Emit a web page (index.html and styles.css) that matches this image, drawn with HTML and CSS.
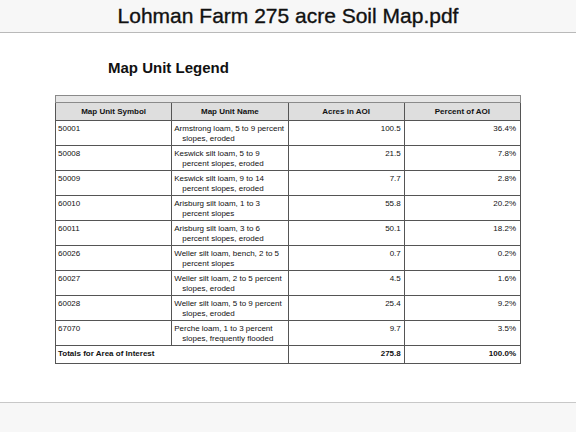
FILE: index.html
```html
<!DOCTYPE html>
<html>
<head>
<meta charset="utf-8">
<link rel="stylesheet" href="styles.css">
</head>
<body>
<div class="app">
  <header class="topbar">
    <h1 class="doc-title">Lohman Farm 275 acre Soil Map.pdf</h1>
  </header>
  <main class="page">
    <h2 class="legend-title">Map Unit Legend</h2>
    <table class="legend">
      <tr class="band"><td colspan="4"></td></tr>
      <tr class="head">
        <th>Map Unit Symbol</th>
        <th>Map Unit Name</th>
        <th>Acres in AOI</th>
        <th>Percent of AOI</th>
      </tr>
      <tr><td class="sym">50001</td><td class="name">Armstrong loam, 5 to 9 percent slopes, eroded</td><td class="num">100.5</td><td class="num pct">36.4%</td></tr>
      <tr><td class="sym">50008</td><td class="name">Keswick silt loam, 5 to 9 percent slopes, eroded</td><td class="num">21.5</td><td class="num pct">7.8%</td></tr>
      <tr><td class="sym">50009</td><td class="name">Keswick silt loam, 9 to 14 percent slopes, eroded</td><td class="num">7.7</td><td class="num pct">2.8%</td></tr>
      <tr><td class="sym">60010</td><td class="name">Arisburg silt loam, 1 to 3 percent slopes</td><td class="num">55.8</td><td class="num pct">20.2%</td></tr>
      <tr><td class="sym">60011</td><td class="name">Arisburg silt loam, 3 to 6 percent slopes, eroded</td><td class="num">50.1</td><td class="num pct">18.2%</td></tr>
      <tr><td class="sym">60026</td><td class="name">Weller silt loam, bench, 2 to 5 percent slopes</td><td class="num">0.7</td><td class="num pct">0.2%</td></tr>
      <tr><td class="sym">60027</td><td class="name">Weller silt loam, 2 to 5 percent slopes, eroded</td><td class="num">4.5</td><td class="num pct">1.6%</td></tr>
      <tr><td class="sym">60028</td><td class="name">Weller silt loam, 5 to 9 percent slopes, eroded</td><td class="num">25.4</td><td class="num pct">9.2%</td></tr>
      <tr><td class="sym">67070</td><td class="name">Perche loam, 1 to 3 percent slopes, frequently flooded</td><td class="num">9.7</td><td class="num pct">3.5%</td></tr>
      <tr class="total"><td colspan="2" class="sym">Totals for Area of Interest</td><td class="num">275.8</td><td class="num pct">100.0%</td></tr>
    </table>
  </main>
  <footer class="bottombar"></footer>
</div>
</body>
</html>
```
FILE: styles.css
```css
html, body {
  margin: 0;
  padding: 0;
  background: #ffffff;
}
.app {
  width: 576px;
  height: 432px;
  display: flex;
  flex-direction: column;
  font-family: "Liberation Sans", Arial, sans-serif;
  color: #111;
  overflow: hidden;
}
.topbar {
  height: 32px;
  background: #f7f7f7;
  border-bottom: 1px solid #b9b9b9;
  display: flex;
  align-items: center;
  justify-content: center;
  flex: none;
}
.doc-title {
  margin: 0;
  font-size: 21px;
  font-weight: normal;
  -webkit-text-stroke: 0.35px #111;
  color: #111;
  line-height: 24px;
  padding-top: 0;
}
.page {
  flex: 1;
  padding-top: 26px;
}
.legend-title {
  margin: 0 0 18px 108px;
  font-size: 15px;
  font-weight: bold;
  line-height: 18px;
}
.legend {
  margin-left: 55px;
  width: 466px;
  border-collapse: collapse;
  table-layout: fixed;
  font-size: 8px;
  border: 1px solid #8a8a8a;
}
.legend td, .legend th {
  border: 1px solid #555;
  padding: 0;
}
.legend tr {
  height: 25px;
}
.legend tr.band {
  height: 7px;
}
.legend tr.band td {
  background: #e6e6e6;
  border-color: #8a8a8a;
}
.legend tr.head {
  height: 18px;
}
.legend th {
  background: #dedede;
  font-weight: bold;
  text-align: center;
  vertical-align: middle;
  line-height: 10px;
}
.legend td {
  vertical-align: top;
  line-height: 9.5px;
  padding-top: 3px;
}
.legend td.sym {
  padding-left: 2px;
}
.legend td.name {
  padding-left: 10px;
  padding-right: 1px;
  text-indent: -8px;
}
.legend td.num {
  text-align: right;
  padding-right: 3px;
}
.legend td.pct {
  padding-right: 4px;
}
.legend tr.total {
  height: 18px;
}
.legend tr.total td {
  font-weight: bold;
  padding-top: 3px;
}
.bottombar {
  height: 29px;
  flex: none;
  background: #f7f7f7;
  border-top: 1px solid #c8c8c8;
}
```
